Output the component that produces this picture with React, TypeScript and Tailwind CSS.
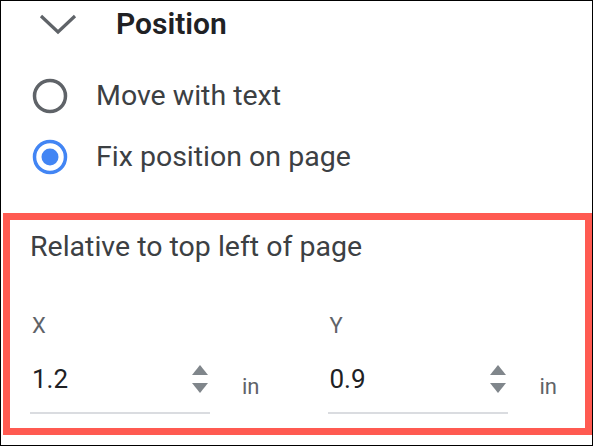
function Chevron() {
  return (
    <svg width="40" height="24" viewBox="0 0 40 24">
      <path d="M3 4 L20 20 L37 4" fill="none" stroke="#5f6368" strokeWidth="3.2" />
    </svg>
  );
}

function Radio({ checked }: { checked: boolean }) {
  return checked ? (
    <svg width="36" height="36" viewBox="0 0 36 36">
      <circle cx="18" cy="18" r="15.5" fill="none" stroke="#4285f4" strokeWidth="3.5" />
      <circle cx="18" cy="18" r="8.5" fill="#4285f4" />
    </svg>
  ) : (
    <svg width="36" height="36" viewBox="0 0 36 36">
      <circle cx="18" cy="18" r="15.5" fill="none" stroke="#5f6368" strokeWidth="3.5" />
    </svg>
  );
}

function Spinner() {
  return (
    <svg width="18" height="30" viewBox="0 0 18 30">
      <path d="M9 1 L17 11 L1 11 Z" fill="#80868b" />
      <path d="M1 19 L17 19 L9 29 Z" fill="#80868b" />
    </svg>
  );
}

function Field({ label, value }: { label: string; value: string }) {
  return (
    <div className="flex flex-col">
      <span className="text-[22px] leading-none text-[#5f6368] pl-[2px]">{label}</span>
      <div className="flex items-end mt-[24px]">
        <div className="w-[180px] flex items-center justify-between border-b-2 border-[#dadce0] pb-[15px] pl-[2px] pr-[1px]">
          <span className="text-[26px] leading-[36px] text-[#202124]">{value}</span>
          <Spinner />
        </div>
        <span className="text-[22px] leading-none text-[#5f6368] ml-[32px] mb-[16px]">in</span>
      </div>
    </div>
  );
}

export default function App() {
  return (
    <div
      className="w-[593px] h-[446px] border border-black bg-white flex flex-col overflow-hidden"
      style={{ fontFamily: 'Roboto, "Noto Sans", sans-serif' }}
    >
      {/* header */}
      <div className="flex items-center h-[44px] pl-[37px] mt-[1px]">
        <Chevron />
        <span className="ml-[38px] text-[30px] font-semibold text-[#202124] leading-none">Position</span>
      </div>

      {/* radio options */}
      <div className="flex flex-col gap-[25px] mt-[32px] pl-[31px]">
        <div className="flex items-center gap-[28px]">
          <Radio checked={false} />
          <span className="text-[28.5px] text-[#3c4043] leading-none">Move with text</span>
        </div>
        <div className="flex items-center gap-[28px]">
          <Radio checked={true} />
          <span className="text-[28.5px] text-[#3c4043] leading-none">Fix position on page</span>
        </div>
      </div>

      {/* highlighted section */}
      <div className="mt-[38px] ml-[2px] w-[589px] h-[222px] border-[7px] border-[#ff5a51] flex flex-col pl-[20px] pt-[10px]">
        <span className="text-[28.5px] text-[#3c4043] leading-[34px]">Relative to top left of page</span>
        <div className="flex mt-[51px] gap-[68px]">
          <Field label="X" value="1.2" />
          <Field label="Y" value="0.9" />
        </div>
      </div>
    </div>
  );
}
